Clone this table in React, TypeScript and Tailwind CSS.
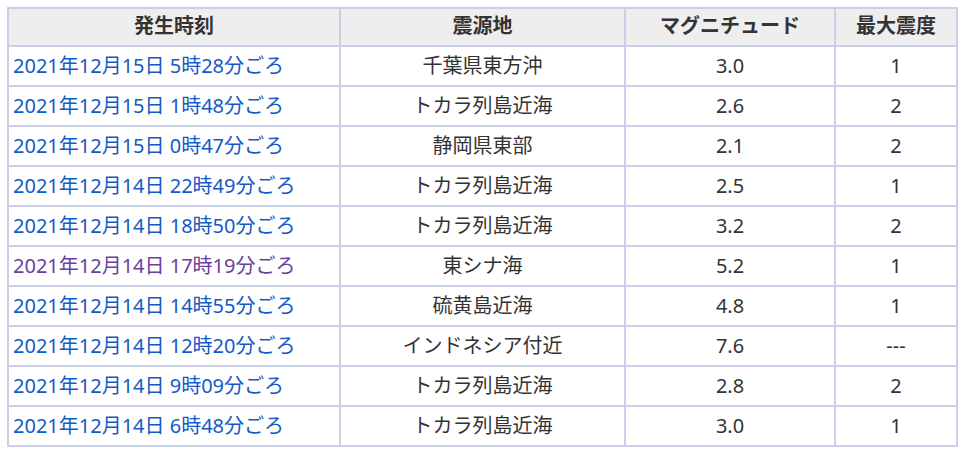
import React from "react";

const rows: [string, string, string, string, boolean][] = [
  ["2021年12月15日 5時28分ごろ", "千葉県東方沖", "3.0", "1", false],
  ["2021年12月15日 1時48分ごろ", "トカラ列島近海", "2.6", "2", false],
  ["2021年12月15日 0時47分ごろ", "静岡県東部", "2.1", "2", false],
  ["2021年12月14日 22時49分ごろ", "トカラ列島近海", "2.5", "1", false],
  ["2021年12月14日 18時50分ごろ", "トカラ列島近海", "3.2", "2", false],
  ["2021年12月14日 17時19分ごろ", "東シナ海", "5.2", "1", true],
  ["2021年12月14日 14時55分ごろ", "硫黄島近海", "4.8", "1", false],
  ["2021年12月14日 12時20分ごろ", "インドネシア付近", "7.6", "---", false],
  ["2021年12月14日 9時09分ごろ", "トカラ列島近海", "2.8", "2", false],
  ["2021年12月14日 6時48分ごろ", "トカラ列島近海", "3.0", "1", false],
];

const cell = "border border-[#c8cfe6] flex items-center shrink-0 leading-none";

export default function App() {
  return (
    <div
      className="bg-white w-[964px] h-[451px] pt-[7px] pl-[7px]"
      style={{ fontFamily: '"Noto Sans", "Noto Sans CJK JP", sans-serif' }}
    >
      <div className="border border-[#c8cfe6] w-[951px] text-[20px] text-[#333]">
        <div className="flex bg-[#eeeeee] font-bold">
          <div className={`${cell} w-[332px] h-[38px] justify-center pb-[2px]`}>発生時刻</div>
          <div className={`${cell} w-[285px] h-[38px] justify-center pb-[2px]`}>震源地</div>
          <div className={`${cell} w-[210px] h-[38px] justify-center pb-[2px]`}>マグニチュード</div>
          <div className={`${cell} w-[122px] h-[38px] justify-center pb-[2px]`}>最大震度</div>
        </div>
        {rows.map(([t, p, m, s, visited], i) => (
          <div className="flex" key={i}>
            <div className={`${cell} w-[332px] h-[40px] pl-[4px]`}>
              <a
                href="#"
                className={visited ? "text-[#6a3f9e]" : "text-[#1459c7]"}
              >
                {t}
              </a>
            </div>
            <div className={`${cell} w-[285px] h-[40px] justify-center`}>{p}</div>
            <div className={`${cell} w-[210px] h-[40px] justify-center`}>{m}</div>
            <div className={`${cell} w-[122px] h-[40px] justify-center`}>{s}</div>
          </div>
        ))}
      </div>
    </div>
  );
}
